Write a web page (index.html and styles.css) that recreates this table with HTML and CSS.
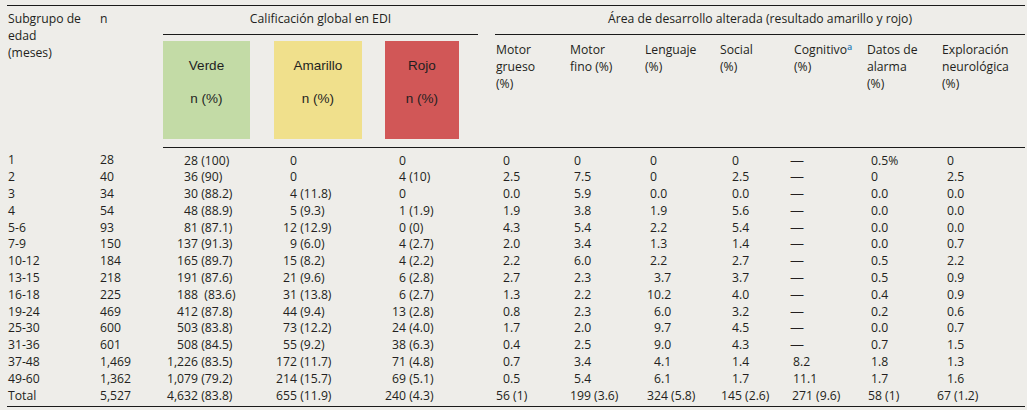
FILE: index.html
```html
<!DOCTYPE html>
<html lang="es">
<head>
<meta charset="utf-8">
<title>Calificación global en EDI</title>
<link rel="stylesheet" href="styles.css">
</head>
<body>
<div class="page">
<table class="edi">
  <colgroup>
    <col class="w1"><col class="w2"><col class="w3"><col class="w4"><col class="w5">
    <col class="w6"><col class="w7"><col class="w8"><col class="w9"><col class="w10"><col class="w11"><col class="w12">
  </colgroup>
  <thead>
    <tr class="h1">
      <th rowspan="2" class="age">Subgrupo de<br>edad<br>(meses)</th>
      <th rowspan="2" class="n">n</th>
      <th colspan="3" class="group"><div class="gline edi-line">Calificación global en EDI</div></th>
      <th colspan="7" class="group"><div class="gline area-line">Área de desarrollo alterada (resultado amarillo y rojo)</div></th>
    </tr>
    <tr class="h2">
      <th class="boxcell"><div class="box verde"><span>Verde</span><span>n (%)</span></div></th>
      <th class="boxcell"><div class="box amarillo"><span>Amarillo</span><span>n (%)</span></div></th>
      <th class="boxcell"><div class="box rojo"><span>Rojo</span><span>n (%)</span></div></th>
      <th class="sub c6">Motor<br>grueso<br>(%)</th>
      <th class="sub c7">Motor<br>fino (%)</th>
      <th class="sub c8">Lenguaje<br>(%)</th>
      <th class="sub c9">Social<br>(%)</th>
      <th class="sub c10">Cognitivo<sup>a</sup><br>(%)</th>
      <th class="sub c11">Datos de<br>alarma<br>(%)</th>
      <th class="sub c12">Exploración<br>neurológica<br>(%)</th>
    </tr>
  </thead>
  <tbody>
    <tr class="first">
      <td class="age">1</td><td class="n">28</td>
      <td class="v"><span class="num">28</span> (100)</td>
      <td class="a"><span class="num">0</span></td>
      <td class="r"><span class="num">0</span></td>
      <td class="c6">0</td><td class="c7">0</td><td class="c8">0</td><td class="c9">0</td><td class="c10 dash">—</td><td class="c11">0.5%</td><td class="c12">0</td>
    </tr>
    <tr>
      <td class="age">2</td><td class="n">40</td>
      <td class="v"><span class="num">36</span> (90)</td>
      <td class="a"><span class="num">0</span></td>
      <td class="r"><span class="num">4</span> (10)</td>
      <td class="c6">2.5</td><td class="c7">7.5</td><td class="c8">0</td><td class="c9">2.5</td><td class="c10 dash">—</td><td class="c11">0</td><td class="c12">2.5</td>
    </tr>
    <tr>
      <td class="age">3</td><td class="n">34</td>
      <td class="v"><span class="num">30</span> (88.2)</td>
      <td class="a"><span class="num">4</span> (11.8)</td>
      <td class="r"><span class="num">0</span></td>
      <td class="c6">0.0</td><td class="c7">5.9</td><td class="c8">0.0</td><td class="c9">0.0</td><td class="c10 dash">—</td><td class="c11">0.0</td><td class="c12">0.0</td>
    </tr>
    <tr>
      <td class="age">4</td><td class="n">54</td>
      <td class="v"><span class="num">48</span> (88.9)</td>
      <td class="a"><span class="num">5</span> (9.3)</td>
      <td class="r"><span class="num">1</span> (1.9)</td>
      <td class="c6">1.9</td><td class="c7">3.8</td><td class="c8">1.9</td><td class="c9">5.6</td><td class="c10 dash">—</td><td class="c11">0.0</td><td class="c12">0.0</td>
    </tr>
    <tr>
      <td class="age">5-6</td><td class="n">93</td>
      <td class="v"><span class="num">81</span> (87.1)</td>
      <td class="a"><span class="num">12</span> (12.9)</td>
      <td class="r"><span class="num">0</span> (0)</td>
      <td class="c6">4.3</td><td class="c7">5.4</td><td class="c8">2.2</td><td class="c9">5.4</td><td class="c10 dash">—</td><td class="c11">0.0</td><td class="c12">0.0</td>
    </tr>
    <tr>
      <td class="age">7-9</td><td class="n">150</td>
      <td class="v"><span class="num">137</span> (91.3)</td>
      <td class="a"><span class="num">9</span> (6.0)</td>
      <td class="r"><span class="num">4</span> (2.7)</td>
      <td class="c6">2.0</td><td class="c7">3.4</td><td class="c8">1.3</td><td class="c9">1.4</td><td class="c10 dash">—</td><td class="c11">0.0</td><td class="c12">0.7</td>
    </tr>
    <tr>
      <td class="age">10-12</td><td class="n">184</td>
      <td class="v"><span class="num">165</span> (89.7)</td>
      <td class="a"><span class="num">15</span> (8.2)</td>
      <td class="r"><span class="num">4</span> (2.2)</td>
      <td class="c6">2.2</td><td class="c7">6.0</td><td class="c8">2.2</td><td class="c9">2.7</td><td class="c10 dash">—</td><td class="c11">0.5</td><td class="c12">2.2</td>
    </tr>
    <tr>
      <td class="age">13-15</td><td class="n">218</td>
      <td class="v"><span class="num">191</span> (87.6)</td>
      <td class="a"><span class="num">21</span> (9.6)</td>
      <td class="r"><span class="num">6</span> (2.8)</td>
      <td class="c6">2.7</td><td class="c7">2.3</td><td class="c8 sh">3.7</td><td class="c9">3.7</td><td class="c10 dash">—</td><td class="c11">0.5</td><td class="c12">0.9</td>
    </tr>
    <tr>
      <td class="age">16-18</td><td class="n">225</td>
      <td class="v"><span class="num">188</span>&nbsp; (83.6)</td>
      <td class="a"><span class="num">31</span> (13.8)</td>
      <td class="r"><span class="num">6</span> (2.7)</td>
      <td class="c6">1.3</td><td class="c7">2.2</td><td class="c8 wide">10.2</td><td class="c9">4.0</td><td class="c10 dash">—</td><td class="c11">0.4</td><td class="c12">0.9</td>
    </tr>
    <tr>
      <td class="age">19-24</td><td class="n">469</td>
      <td class="v"><span class="num">412</span> (87.8)</td>
      <td class="a"><span class="num">44</span> (9.4)</td>
      <td class="r"><span class="num">13</span> (2.8)</td>
      <td class="c6">0.8</td><td class="c7">2.3</td><td class="c8 sh">6.0</td><td class="c9">3.2</td><td class="c10 dash">—</td><td class="c11">0.2</td><td class="c12">0.6</td>
    </tr>
    <tr>
      <td class="age">25-30</td><td class="n">600</td>
      <td class="v"><span class="num">503</span> (83.8)</td>
      <td class="a"><span class="num">73</span> (12.2)</td>
      <td class="r"><span class="num">24</span> (4.0)</td>
      <td class="c6">1.7</td><td class="c7">2.0</td><td class="c8 sh">9.7</td><td class="c9">4.5</td><td class="c10 dash">—</td><td class="c11">0.0</td><td class="c12">0.7</td>
    </tr>
    <tr>
      <td class="age">31-36</td><td class="n">601</td>
      <td class="v"><span class="num">508</span> (84.5)</td>
      <td class="a"><span class="num">55</span> (9.2)</td>
      <td class="r"><span class="num">38</span> (6.3)</td>
      <td class="c6">0.4</td><td class="c7">2.5</td><td class="c8 sh">9.0</td><td class="c9">4.3</td><td class="c10 dash">—</td><td class="c11">0.7</td><td class="c12">1.5</td>
    </tr>
    <tr>
      <td class="age">37-48</td><td class="n">1,469</td>
      <td class="v"><span class="num">1,226</span> (83.5)</td>
      <td class="a"><span class="num">172</span> (11.7)</td>
      <td class="r"><span class="num">71</span> (4.8)</td>
      <td class="c6">0.7</td><td class="c7">3.4</td><td class="c8 sh">4.1</td><td class="c9">1.4</td><td class="c10">8.2</td><td class="c11">1.8</td><td class="c12">1.3</td>
    </tr>
    <tr>
      <td class="age">49-60</td><td class="n">1,362</td>
      <td class="v"><span class="num">1,079</span> (79.2)</td>
      <td class="a"><span class="num">214</span> (15.7)</td>
      <td class="r"><span class="num">69</span> (5.1)</td>
      <td class="c6">0.5</td><td class="c7">5.4</td><td class="c8 sh">6.1</td><td class="c9">1.7</td><td class="c10">11.1</td><td class="c11">1.7</td><td class="c12">1.6</td>
    </tr>
    <tr class="total">
      <td class="age">Total</td><td class="n">5,527</td>
      <td class="v"><span class="num">4,632</span> (83.8)</td>
      <td class="a"><span class="num">655</span> (11.9)</td>
      <td class="r"><span class="num">240</span> (4.3)</td>
      <td class="c6">56 (1)</td><td class="c7">199 (3.6)</td><td class="c8">324 (5.8)</td><td class="c9">145 (2.6)</td><td class="c10">271 (9.6)</td><td class="c11">58 (1)</td><td class="c12">67 (1.2)</td>
    </tr>
  </tbody>
</table>
</div>
</body>
</html>
```

FILE: styles.css
```css
html, body {
  margin: 0;
  padding: 0;
  background: #eeede9;
}

.page {
  padding: 5px 2px 0 7px;
  font-family: "Open Sans", "Noto Sans", "DejaVu Sans", sans-serif;
  font-size: 12.2px;
  color: #231f20;
}

.edi {
  width: 1018px;
  table-layout: fixed;
  border-collapse: collapse;
  border-top: 1px solid #1a1a1a;
  border-bottom: 1px solid #1a1a1a;
}

.w1 { width: 93px; }
.w2 { width: 63px; }
.w3 { width: 111px; }
.w4 { width: 111px; }
.w5 { width: 111px; }
.w6 { width: 74px; }
.w7 { width: 75px; }
.w8 { width: 75px; }
.w9 { width: 70px; }
.w10 { width: 77px; }
.w11 { width: 70px; }
.w12 { width: 88px; }

th, td {
  padding: 0;
  text-align: left;
  font-weight: normal;
  vertical-align: top;
  white-space: nowrap;
  line-height: 17px;
}

thead tr.h2 th {
  border-bottom: 1px solid #1a1a1a;
}

.h1 th {
  padding-top: 4px;
}

.age { padding-left: 1px; }
.n { padding-left: 0; }

.group {
  text-align: center;
}

.gline {
  border-bottom: 1px solid #1a1a1a;
  padding-bottom: 7px;
}

.edi-line { margin-right: 18px; }
.area-line { margin-left: -1px; }

.boxcell {
  padding-top: 6px;
  padding-bottom: 8px;
}

.box {
  display: flex;
  flex-direction: column;
  align-items: center;
  gap: 16px;
  height: 98px;
  box-sizing: border-box;
  padding-top: 16px;
  font-family: "Liberation Sans", Arial, sans-serif;
  font-size: 13.5px;
  color: #1f1f1f;
}

.verde { width: 87px; background: #c3dba6; }
.amarillo { width: 88px; background: #f0e08c; }
.rojo { width: 74px; background: #d15757; }

.sub {
  padding-top: 6px;
}

sup {
  font-size: 9px;
  font-weight: 600;
  line-height: 0;
  vertical-align: 4px;
  color: #2f7fb8;
}

.sub.c10 { padding-left: 4px; }
.sub.c12 { padding-left: 5px; }

tbody td {
  line-height: 16.8px;
}

tbody tr.first td {
  padding-top: 4.5px;
}

tbody tr.total td {
  padding-bottom: 1.5px;
}

.num {
  display: inline-block;
  text-align: right;
}

.v .num { width: 35px; }
.a .num { width: 23px; }
.r .num { width: 21px; }

td.c6 { padding-left: 7px; }
td.c7 { padding-left: 4px; }
td.c8 { padding-left: 5px; }
td.c8.sh { padding-left: 9px; }
td.c8.wide { padding-left: 2px; }
td.c9 { padding-left: 12px; }
td.c10 { padding-left: 3px; }
td.c10.dash { padding-left: 0; transform: scaleX(1.15); transform-origin: left center; }
td.c11 { padding-left: 4px; }
td.c12 { padding-left: 10px; }

tr.total td.c6 { padding-left: 0; }
tr.total td.c7 { padding-left: 0; }
tr.total td.c8 { padding-left: 2px; }
tr.total td.c9 { padding-left: 1px; }
tr.total td.c10 { padding-left: 2px; }
tr.total td.c11 { padding-left: 1px; }
tr.total td.c12 { padding-left: 0; }
```
